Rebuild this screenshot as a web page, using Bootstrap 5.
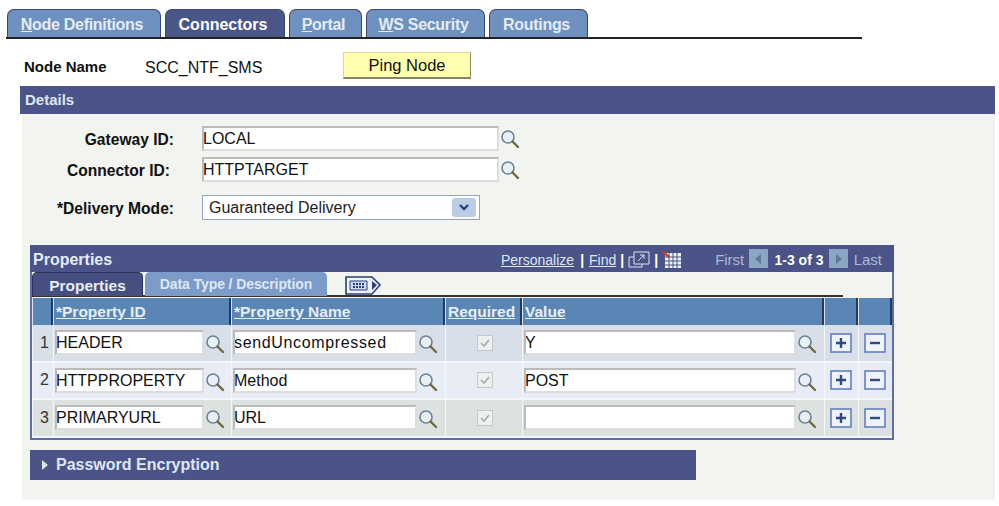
<!DOCTYPE html>
<html lang="en">
<head>
    <meta charset="UTF-8">
    <title>Connectors</title>
    <link href="https://cdn.jsdelivr.net/npm/bootstrap@5.3.0/dist/css/bootstrap.min.css" rel="stylesheet">
    <style>
        body { font-family: "Liberation Sans", Arial, sans-serif; font-size: 15px; color: #111; background: #fff; }
        .page-tabs { margin: 9px 0 0 6px; padding-left: 1px; width: 856px; height: 30px; border-bottom: 2px solid #222; gap: 4px; }
        .page-tabs .nav-link { height: 28px; padding: 4px 4px 0 0; text-align: center; font-size: 16px; letter-spacing: -.3px; font-weight: 700; line-height: 22px; color: #e4ebf5; background: #6f91bf; border: 1px solid #39466f; border-bottom: 0; border-radius: 7px 7px 0 0; }
        .page-tabs .nav-item:nth-child(1) .nav-link { width: 154px; }
        .page-tabs .nav-item:nth-child(2) .nav-link { width: 120px; letter-spacing: 0; }
        .page-tabs .nav-item:nth-child(3) .nav-link { width: 73px; }
        .page-tabs .nav-item:nth-child(4) .nav-link { width: 119px; }
        .page-tabs .nav-item:nth-child(5) .nav-link { width: 99px; }
        .page-tabs .nav-link.active { color: #fff; background: #4a5588; }
        .page-tabs u { text-decoration-thickness: 1px; }
        .node-row { height: 47px; padding: 14px 0 0 24px; }
        .node-label { width: 121px; font-weight: 700; padding-top: 3px; }
        .node-value { width: 198px; padding-top: 3px; font-size: 16px; }
        .ping-btn { width: 128px; height: 27px; padding: 0; margin-top: -1px; font-size: 16.5px; color: #111; background: #ffffae; border: 1px solid #d8d8a0; border-right-color: #8c8c70; border-bottom: 2px solid #85856a; border-radius: 0; }
        .section-bar { height: 28px; margin-left: 20px; width: 975px; padding: 3px 0 0 5px; font-size: 15px; font-weight: 700; color: #dfe6f2; background: #4a5488; }
        .detail-panel { height: 386px; margin-left: 22px; width: 973px; padding-top: 12px; background: #f2f4f0; }
        .field-row { height: 31px; }
        .field-row.pick { height: 37px; margin-top: 7px; }
        .field-label { width: 152px; padding: 2px 0 0; text-align: right; font-size: 15.6px; font-weight: 700; }
        .field-label.short { width: 148px; }
        .field-gap { width: 28px; flex: none; }
        .field-gap.wide { width: 32px; }
        .text-box { display: block; height: 25px; padding: 0; text-indent: -1px; font-size: 16px; line-height: 22px; color: #111; background: #fff; border: 2px solid #bbb; border-right-color: #ddd; border-bottom-color: #ddd; overflow: hidden; white-space: nowrap; }
        .gw-box { width: 297px; }
        .pick-box { width: 278px; height: 25px; padding: 0 6px; font-size: 16px; line-height: 23px; background: #fff; border: 1px solid #8fa6c9; color: #222; }
        .pick-arrow { width: 24px; height: 19px; background: #bccbe6; border-radius: 3px; margin-right: -3px; }
        .look { width: 20px; height: 20px; flex: none; margin-left: 1px; margin-top: 3px; }
        .prop-grid { width: 864px; margin: 13px 0 0 8px; border: 2px solid #5f6ca8; border-top: 0; }
        .grid-head { height: 27px; margin: 0 -2px; padding: 0 12px 0 3px; color: #e5ebf5; font-weight: 700; background: #4a5488; }
        .grid-head .ttl { font-size: 16px; margin-top: 3px; }
        .grid-links { font-size: 14px; font-weight: 400; color: #dde5f2; margin-top: 4px; }
        .grid-links a { color: #dde5f2; }
        .grid-links .sep { color: #fff; font-weight: 700; margin: 0 4px; }
        .grid-links .sep.first-sep { margin: 0 5px 0 6px; }
        .pager { margin-left: 33px; font-size: 15px; color: #aeb9d4; }
        .pager b { color: #fff; font-size: 14px; margin: 0 5px; }
        .pg-btn { display: inline-flex; align-items: center; justify-content: center; width: 19px; height: 19px; margin: 0 1px; background: #8ba6c4; position: relative; top: -2px; }
        .grid-tabs { height: 25px; gap: 2px; border-bottom: 2px solid #333; margin-right: 49px; }
        .grid-tabs .nav-link { height: 24px; padding: 1px 12px 0; font-size: 14px; font-weight: 700; color: #dfe7f3; background: #7b9cc8; border: 0; border-radius: 5px 5px 0 0; }
        .grid-tabs .nav-link.active { font-size: 15.5px; color: #e8edf6; background: #454f80; border: 1px solid #2b3358; border-bottom: 0; }
        .grid-tabs .nav-item:first-child .nav-link { width: 111px; text-align: center; padding: 1px 0 0; }
        .grid-tabs .nav-item:nth-child(2) .nav-link { width: 182px; text-align: center; padding: 2px 0 0; letter-spacing: -.1px; }
        .show-all { margin: 3px 0 0 16px; width: 36px; height: 19px; }
        .prop-table { table-layout: fixed; width: 860px; margin: 1px 0 0; border-collapse: separate; border-spacing: 0; }
        .prop-table th { height: 27px; padding: 0 0 0 2px; background: #5a86b5; border-right: 2px solid #1f3a66; border-left: 1px solid #dce4ef; font-size: 15.5px; }
        .prop-table th a { color: #e8eef7; }
        .prop-table td { height: 37.5px; padding: 0 0 0 1px; border-left: 1px solid #f4f6f8; border-bottom: 2px solid #f4f6f8; vertical-align: middle; }
        .prop-table tr.r1 td { background: #d9dfe9; }
        .prop-table tr.r2 td { background: #e7ecf5; }
        .prop-table tr.r3 td { background: #dde1df; }
        .prop-table td.row-num { text-align: right; padding: 0 4px 0 0; font-size: 16px; color: #333; }
        .prop-table td.btn-cell { padding: 0 1px 0 0; }
        .id-box { width: 149px; }
        .name-box { width: 184px; }
        .val-box { width: 272px; }
        .wide-text { letter-spacing: .65px; }
        .cell-flex { display: flex; align-items: center; }
        .cell-flex .look { margin: 3px 0 0 1px; }
        .ro-check { display: block; width: 16px; height: 16px; margin: 0 auto; }
        .sq-btn { display: block; width: 22px; height: 20px; margin: 0 auto; }
        .collapse-bar { width: 666px; height: 30px; margin: 10px 0 0 8px; padding: 3px 0 0 26px; position: relative; font-size: 16px; font-weight: 700; color: #dfe6f2; background: #4a5488; }
        .collapse-arrow { position: absolute; left: 12px; top: 10px; width: 0; height: 0; border-left: 6px solid #dfe6f2; border-top: 5px solid transparent; border-bottom: 5px solid transparent; }
    </style>
</head>
<body>
<svg width="0" height="0" class="position-absolute">
    <symbol id="mag" viewBox="0 0 20 20">
        <circle cx="8" cy="8" r="6" fill="#e8f0f6" stroke="#6d8296" stroke-width="1.6"/>
        <path d="M12.5 12.5 18 18" stroke="#6e6a3c" stroke-width="2.4" stroke-linecap="round"/>
    </symbol>
    <symbol id="chk" viewBox="0 0 16 16">
        <rect x=".5" y=".5" width="15" height="15" fill="#eef0f0" stroke="#c4c8c8"/>
        <path d="M4 8l3 3 5-6" fill="none" stroke="#a6acac" stroke-width="1.6"/>
    </symbol>
    <symbol id="plus" viewBox="0 0 22 20">
        <rect x="1" y="1" width="20" height="18" fill="#eef2f9" stroke="#5a78c0" stroke-width="1.5"/>
        <path d="M11 5v10M6 10h10" stroke="#2f4a80" stroke-width="2.4"/>
    </symbol>
    <symbol id="minus" viewBox="0 0 22 20">
        <rect x="1" y="1" width="20" height="18" fill="#eef2f9" stroke="#5a78c0" stroke-width="1.5"/>
        <path d="M6 10h10" stroke="#2f4a80" stroke-width="2.4"/>
    </symbol>
</svg>

<!-- page tabs -->
<ul class="nav page-tabs">
    <li class="nav-item"><a class="nav-link" href="#"><u>N</u>ode Definitions</a></li>
    <li class="nav-item"><a class="nav-link active" href="#">Connectors</a></li>
    <li class="nav-item"><a class="nav-link" href="#"><u>P</u>ortal</a></li>
    <li class="nav-item"><a class="nav-link" href="#"><u>W</u>S Security</a></li>
    <li class="nav-item"><a class="nav-link" href="#">Routings</a></li>
</ul>

<div class="d-flex node-row">
    <div class="node-label">Node Name</div>
    <div class="node-value">SCC_NTF_SMS</div>
    <button type="button" class="btn ping-btn">Ping Node</button>
</div>

<div class="section-bar">Details</div>
<div class="detail-panel">
    <div class="d-flex field-row">
        <div class="field-label">Gateway ID:</div>
        <div class="field-gap"></div>
        <div class="text-box gw-box">LOCAL</div>
        <svg class="look"><use href="#mag"/></svg>
    </div>
    <div class="d-flex field-row">
        <div class="field-label short">Connector ID:</div>
        <div class="field-gap wide"></div>
        <div class="text-box gw-box">HTTPTARGET</div>
        <svg class="look"><use href="#mag"/></svg>
    </div>
    <div class="d-flex field-row pick">
        <div class="field-label">*Delivery Mode:</div>
        <div class="field-gap"></div>
        <div class="pick-box d-flex justify-content-between align-items-center">
            <span>Guaranteed Delivery</span>
            <span class="pick-arrow d-flex align-items-center justify-content-center">
                <svg width="12" height="8" viewBox="0 0 12 8"><path d="M2 1l4 4 4-4" fill="none" stroke="#2a3f78" stroke-width="2.4"/></svg>
            </span>
        </div>
    </div>

    <!-- properties grid -->
    <div class="prop-grid">
        <div class="grid-head d-flex justify-content-between">
            <div class="ttl">Properties</div>
            <div class="grid-links d-flex align-items-center">
                <a href="#">Personalize</a><span class="sep first-sep">|</span><a href="#">Find</a><span class="sep">|</span>
                <svg width="22" height="20" viewBox="0 0 22 20"><path d="M6 1h15v12H6z" fill="none" stroke="#dde5f2"/><path d="M1 6h5M1 6v10h13v-3M10 10l6-6M12 4h4v4" fill="none" stroke="#dde5f2"/></svg>
                <span class="sep">|</span>
                <svg width="20" height="20" viewBox="0 0 20 20"><rect x="3" y="2" width="16" height="15" fill="#eef1fa"/><path d="M3 6h16M3 10h16M3 14h16M7 2v15M11 2v15M15 2v15" stroke="#4a5488"/><path d="M0 0l7 6" stroke="#c8402c" stroke-width="2.4"/></svg>
                <span class="pager d-flex align-items-center">First&nbsp;<span class="pg-btn"><svg width="7" height="10" viewBox="0 0 7 10"><path d="M6 0v10L0 5z" fill="#5f7896"/></svg></span><b>1-3 of 3</b><span class="pg-btn"><svg width="7" height="10" viewBox="0 0 7 10"><path d="M1 0v10l6-5z" fill="#5f7896"/></svg></span>&nbsp;Last</span>
            </div>
        </div>
        <div class="d-flex">
            <ul class="nav grid-tabs flex-grow-1">
                <li class="nav-item"><a class="nav-link active" href="#">Properties</a></li>
                <li class="nav-item"><a class="nav-link" href="#">Data Type / Description</a></li>
                <li class="nav-item">
                    <svg class="show-all" viewBox="0 0 36 19"><path d="M1 1h26l8 8-8 9H1z" fill="#eef2fa" stroke="#2b3f78" stroke-width="1.6"/><path d="M5 5h17v9H5z" fill="#cfd9ee" stroke="#2b3f78"/><path d="M8 8h12M8 11h12" stroke="#2b3f78" stroke-dasharray="2 1" stroke-width="2"/><path d="M27 5l5 4-5 5z" fill="#2b3f78"/></svg>
                </li>
            </ul>
        </div>
        <table class="prop-table">
            <colgroup>
                <col style="width:21px"><col style="width:178px"><col style="width:214px"><col style="width:77px"><col style="width:302px"><col style="width:34px"><col style="width:34px">
            </colgroup>
            <thead>
                <tr>
                    <th></th>
                    <th><a href="#">*Property ID</a></th>
                    <th><a href="#">*Property Name</a></th>
                    <th><a href="#">Required</a></th>
                    <th><a href="#">Value</a></th>
                    <th></th>
                    <th></th>
                </tr>
            </thead>
            <tbody id="propRows"></tbody>
        </table>
    </div>

    <div class="collapse-bar"><span class="collapse-arrow"></span>Password Encryption</div>
</div>

<script src="https://cdn.jsdelivr.net/npm/bootstrap@5.3.0/dist/js/bootstrap.bundle.min.js"></script>
<script>
    const props = [
        {id: 'HEADER', name: 'sendUncompressed', value: 'Y', wide: true},
        {id: 'HTTPPROPERTY', name: 'Method', value: 'POST'},
        {id: 'PRIMARYURL', name: 'URL', value: ''}
    ];
    const mag = '<svg class="look"><use href="#mag"/></svg>';
    document.getElementById('propRows').innerHTML = props.map((p, i) => `
        <tr class="r${i + 1}">
            <td class="row-num">${i + 1}</td>
            <td><div class="cell-flex"><div class="text-box id-box">${p.id}</div>${mag}</div></td>
            <td><div class="cell-flex"><div class="text-box name-box${p.wide ? ' wide-text' : ''}">${p.name}</div>${mag}</div></td>
            <td><svg class="ro-check"><use href="#chk"/></svg></td>
            <td><div class="cell-flex"><div class="text-box val-box">${p.value}</div>${mag}</div></td>
            <td class="btn-cell"><svg class="sq-btn"><use href="#plus"/></svg></td>
            <td class="btn-cell"><svg class="sq-btn"><use href="#minus"/></svg></td>
        </tr>`).join('');
</script>
</body>
</html>
